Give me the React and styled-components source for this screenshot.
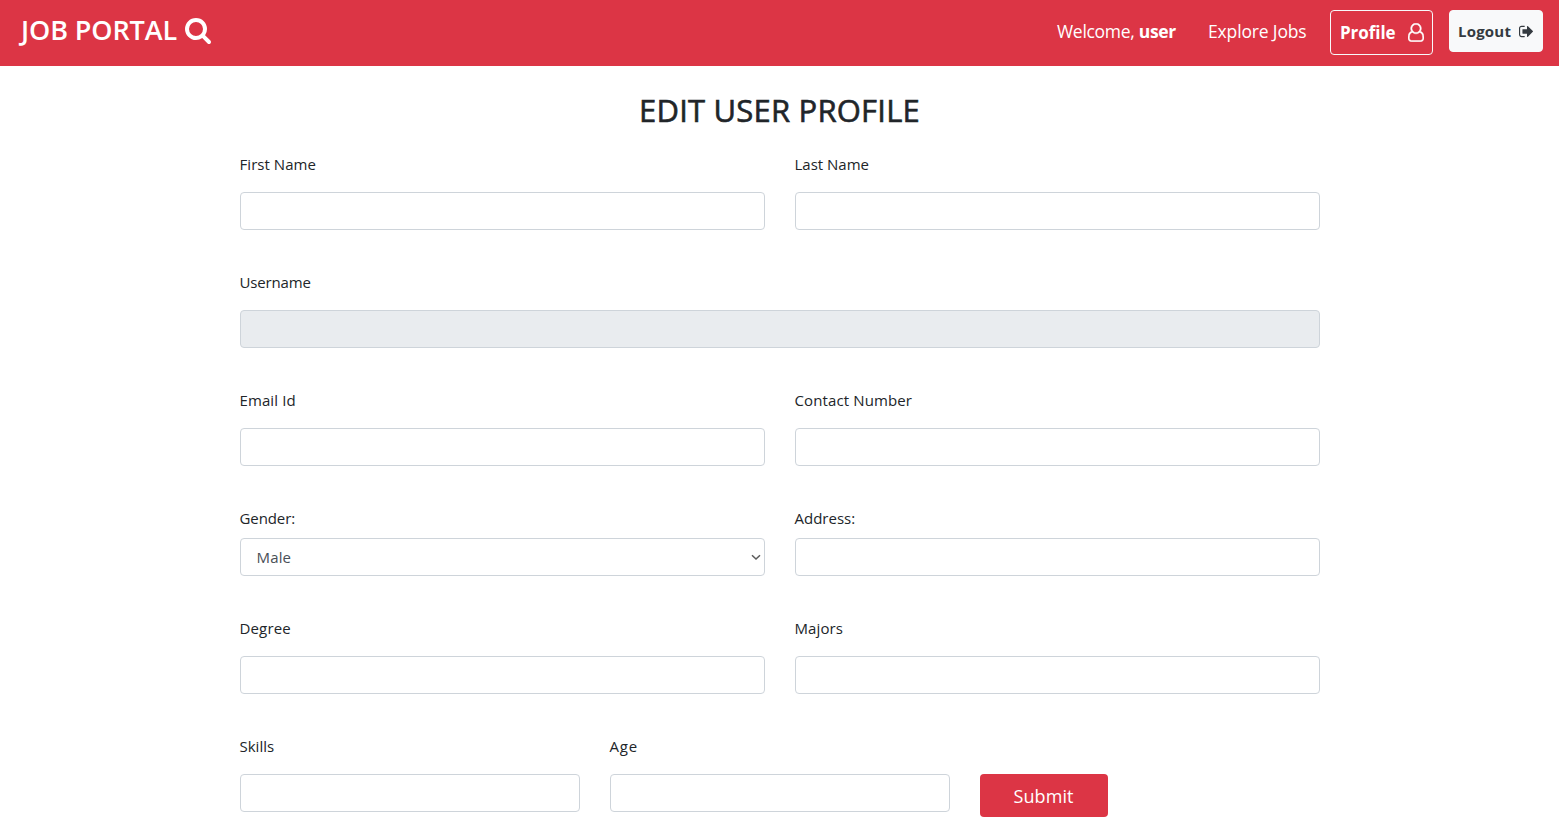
import React from "react";
import styled, { createGlobalStyle } from "styled-components";

const GlobalStyle = createGlobalStyle`
  *, *::before, *::after { box-sizing: border-box; }
  body {
    margin: 0;
    background: #fff;
    color: #212529;
    font-family: "Segoe UI", "Open Sans", "Noto Sans", sans-serif;
    font-size: 15px;
    line-height: 24px;
    overflow: hidden;
  }
`;

const Navbar = styled.nav`
  display: flex;
  align-items: flex-start;
  justify-content: space-between;
  height: 66px;
  padding: 10px 16px 0 21px;
  background: #dc3545;
  color: #fff;
`;

const Brand = styled.a`
  display: flex;
  align-items: center;
  gap: 7.5px;
  height: 40px;
  font-size: 27px;
  font-weight: 600;
  letter-spacing: -0.1px;
  white-space: nowrap;
`;

const NavLinks = styled.div`
  display: flex;
  align-items: flex-start;
`;

const NavText = styled.span`
  width: ${(p) => p.$width}px;
  margin-right: ${(p) => p.$after}px;
  padding-top: 9px;
  font-size: 17.5px;
  letter-spacing: ${(p) => p.$spacing}px;
  white-space: nowrap;
`;

const NavButton = styled.button`
  display: flex;
  align-items: center;
  justify-content: space-between;
  font-family: inherit;
  font-weight: 700;
  border-radius: 4px;
`;

const ProfileButton = styled(NavButton)`
  width: 103px;
  height: 45px;
  margin-right: 16px;
  padding: 0 8px 0 9px;
  border: 1px solid #f8f9fa;
  background: transparent;
  color: #fff;
  font-size: 17px;
  letter-spacing: -0.05px;
`;

const LogoutButton = styled(NavButton)`
  width: 94px;
  height: 42px;
  padding: 0 9px 0 8px;
  border: 1px solid #f8f9fa;
  background: #f8f9fa;
  color: #343a40;
  font-size: 15px;
  letter-spacing: 0.2px;
`;

const Glyph = styled.svg`
  display: block;
  flex: none;
  fill: currentColor;
  stroke: currentColor;
  stroke-width: ${(p) => p.$weight || 0};
`;

const Title = styled.h2`
  margin: 25px 0 23px;
  font-size: 31px;
  font-weight: 500;
  line-height: 38px;
  letter-spacing: 0.2px;
  text-align: center;
  -webkit-text-stroke: 0.6px currentColor;
`;

const Form = styled.form`
  display: flex;
  flex-direction: column;
  gap: 40px;
  width: 1080px;
  margin: 0 auto;
`;

const Row = styled.div`
  display: grid;
  grid-template-columns: repeat(${(p) => p.$columns}, 1fr);
  column-gap: 30px;
`;

const FieldBox = styled.label`
  display: flex;
  flex-direction: column;
  gap: ${(p) => (p.$tight ? 8 : 16)}px;
`;

const Caption = styled.span`
  letter-spacing: ${(p) => p.$spacing}px;
`;

const Input = styled.input`
  width: 100%;
  height: 38px;
  padding: 6px 12px;
  border: 1px solid #ced4da;
  border-radius: 4px;
  background: #fff;
  color: #495057;
  font: inherit;

  &:disabled { background: #e9ecef; }
`;

const SelectWrap = styled.span`
  position: relative;
  display: block;
`;

const Select = styled.select`
  display: block;
  appearance: none;
  width: 100%;
  height: 38px;
  padding: 6px 16px;
  border: 1px solid #ced4da;
  border-radius: 4px;
  background: #fff;
  color: #495057;
  font: inherit;
  letter-spacing: 0.15px;
`;

const Chevron = styled.svg`
  position: absolute;
  right: 4px;
  top: 16px;
  width: 10px;
  height: 7px;
  fill: none;
  stroke: #5c5c5c;
  stroke-width: 1.5;
  pointer-events: none;
`;

const Submit = styled.button`
  align-self: start;
  width: 128px;
  height: 43px;
  margin-top: 40px;
  padding: 1px 0 0;
  border: 0;
  border-radius: 4px;
  background: #dc3545;
  color: #fff;
  font-family: inherit;
  font-size: 18px;
  letter-spacing: 0.1px;
`;

const SearchIcon = () => (
  <Glyph width="26" height="28" viewBox="0 0 1664 1792">
    <path d="M1152 832q0-185-131.5-316.5t-316.5-131.5-316.5 131.5-131.5 316.5 131.5 316.5 316.5 131.5 316.5-131.5 131.5-316.5zm512 832q0 52-38 90t-90 38q-54 0-90-38l-343-342q-179 124-399 124-143 0-273.5-55.5t-225-150-150-225-55.5-273.5 55.5-273.5 150-225 225-150 273.5-55.5 273.5 55.5 225 150 150 225 55.5 273.5q0 220-124 399l343 343q37 37 37 90z" />
  </Glyph>
);

const UserIcon = () => (
  <Glyph width="16" height="19" viewBox="0 0 1536 1792" $weight={45}>
    <path d="M1201 784q47 14 89.5 38t89 73 79.5 115.5 55 172 22 236.5q0 154-100 263.5t-241 109.5h-854q-141 0-241-109.5t-100-263.5q0-131 22-236.5t55-172 79.5-115.5 89-73 89.5-38q-79-125-79-272 0-104 40.5-198.5t109.5-163.5 163.5-109.5 198.5-40.5 198.5 40.5 163.5 109.5 109.5 163.5 40.5 198.5q0 147-79 272zm-433-656q-159 0-271.5 112.5t-112.5 271.5 112.5 271.5 271.5 112.5 271.5-112.5 112.5-271.5-112.5-271.5-271.5-112.5zm427 1536q88 0 150.5-71.5t62.5-173.5q0-239-78.5-377t-225.5-145q-145 127-336 127t-336-127q-147 7-225.5 145t-78.5 377q0 102 62.5 173.5t150.5 71.5h854z" />
  </Glyph>
);

const SignOutIcon = () => (
  <Glyph width="14" height="16" viewBox="0 -50 1568 1792">
    <path d="M640 1440q0 4 1 20t.5 26.5-3 23.5-10 19.5-20.5 6.5h-320q-119 0-203.5-84.5t-84.5-203.5v-704q0-119 84.5-203.5t203.5-84.5h320q13 0 22.5 9.5t9.5 22.5q0 4 1 20t.5 26.5-3 23.5-10 19.5-20.5 6.5h-320q-66 0-113 47t-47 113v704q0 66 47 113t113 47h312l11.5 1 11.5 3 8 5.5 7 9 2 13.5zm928-544q0 26-19 45l-544 544q-19 19-45 19t-45-19-19-45v-288h-448q-26 0-45-19t-19-45v-384q0-26 19-45t45-19h448v-288q0-26 19-45t45-19 45 19l544 544q19 19 19 45z" />
  </Glyph>
);

const Field = ({ label, spacing = 0, tight, children, disabled }) => (
  <FieldBox $tight={tight}>
    <Caption $spacing={spacing}>{label}</Caption>
    {children || <Input type="text" disabled={disabled} />}
  </FieldBox>
);

export default function App() {
  return (
    <>
      <GlobalStyle />
      <Navbar>
        <Brand>JOB PORTAL <SearchIcon /></Brand>
        <NavLinks>
          <NavText $width={119} $after={32} $spacing={-0.3}>Welcome, <b>user</b></NavText>
          <NavText $width={99} $after={23} $spacing={-0.15}>Explore Jobs</NavText>
          <ProfileButton type="button">Profile <UserIcon /></ProfileButton>
          <LogoutButton type="button">Logout <SignOutIcon /></LogoutButton>
        </NavLinks>
      </Navbar>
      <Title>EDIT USER PROFILE</Title>
      <Form>
        <Row $columns={2}>
          <Field label="First Name" spacing={0.05} />
          <Field label="Last Name" />
        </Row>
        <Row $columns={1}>
          <Field label="Username" spacing={-0.15} disabled />
        </Row>
        <Row $columns={2}>
          <Field label="Email Id" spacing={0.1} />
          <Field label="Contact Number" spacing={0.12} />
        </Row>
        <Row $columns={2}>
          <Field label="Gender:" spacing={-0.1} tight>
            <SelectWrap>
              <Select defaultValue="Male">
                <option>Male</option>
                <option>Female</option>
              </Select>
              <Chevron viewBox="0 0 10 7">
                <path d="M1 1.2 L5 5 L9 1.2" />
              </Chevron>
            </SelectWrap>
          </Field>
          <Field label="Address:" tight />
        </Row>
        <Row $columns={2}>
          <Field label="Degree" spacing={0.15} />
          <Field label="Majors" spacing={0.1} />
        </Row>
        <Row $columns={3}>
          <Field label="Skills" />
          <Field label="Age" spacing={0.8} />
          <Submit type="button">Submit</Submit>
        </Row>
      </Form>
    </>
  );
}
